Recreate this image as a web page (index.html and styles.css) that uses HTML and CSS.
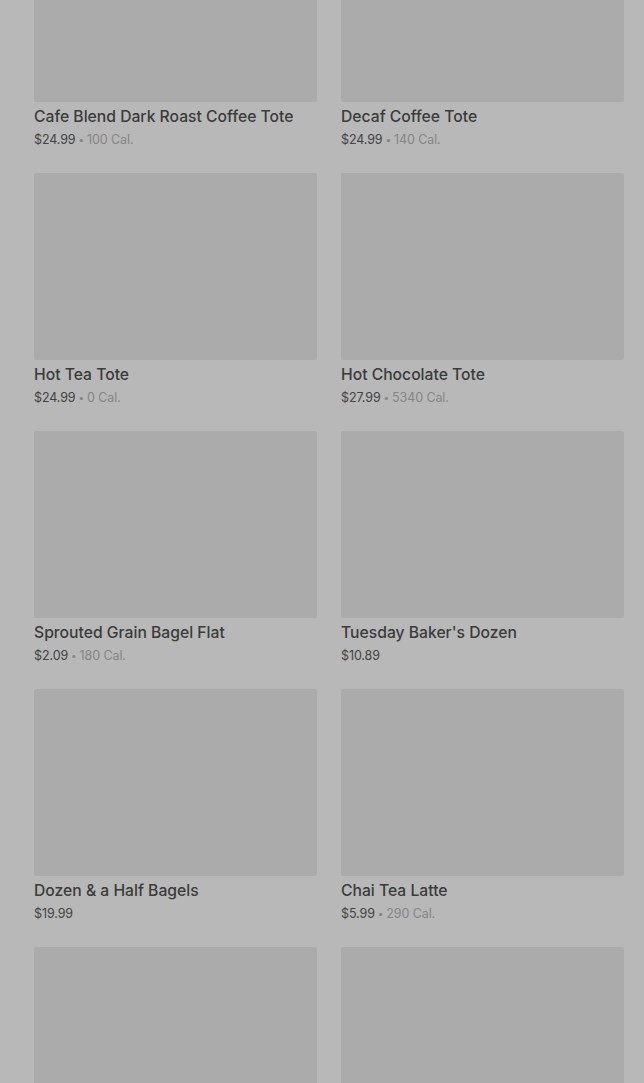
FILE: index.html
```html
<!DOCTYPE html>
<html lang="en">
<head>
    <meta charset="UTF-8">
    <meta name="viewport" content="width=device-width, initial-scale=1.0">
    <title>Menu</title>
    <link rel="stylesheet" href="styles.css">
</head>
<body>

<div class="page">
    <div class="product-grid">
        <div class="product">
            <div class="product-image"></div>
            <h3 class="product-name">Cafe Blend Dark Roast Coffee Tote</h3>
            <p class="product-meta"><span class="price">$24.99</span><span class="cal"><span class="sep">&bull;</span>100 Cal.</span></p>
        </div>
        <div class="product">
            <div class="product-image"></div>
            <h3 class="product-name">Decaf Coffee Tote</h3>
            <p class="product-meta"><span class="price">$24.99</span><span class="cal"><span class="sep">&bull;</span>140 Cal.</span></p>
        </div>
        <div class="product">
            <div class="product-image"></div>
            <h3 class="product-name">Hot Tea Tote</h3>
            <p class="product-meta"><span class="price">$24.99</span><span class="cal"><span class="sep">&bull;</span>0 Cal.</span></p>
        </div>
        <div class="product">
            <div class="product-image"></div>
            <h3 class="product-name">Hot Chocolate Tote</h3>
            <p class="product-meta"><span class="price">$27.99</span><span class="cal"><span class="sep">&bull;</span>5340 Cal.</span></p>
        </div>
        <div class="product">
            <div class="product-image"></div>
            <h3 class="product-name">Sprouted Grain Bagel Flat</h3>
            <p class="product-meta"><span class="price">$2.09</span><span class="cal"><span class="sep">&bull;</span>180 Cal.</span></p>
        </div>
        <div class="product">
            <div class="product-image"></div>
            <h3 class="product-name">Tuesday Baker's Dozen</h3>
            <p class="product-meta"><span class="price">$10.89</span></p>
        </div>
        <div class="product">
            <div class="product-image"></div>
            <h3 class="product-name">Dozen &amp; a Half Bagels</h3>
            <p class="product-meta"><span class="price">$19.99</span></p>
        </div>
        <div class="product">
            <div class="product-image"></div>
            <h3 class="product-name">Chai Tea Latte</h3>
            <p class="product-meta"><span class="price">$5.99</span><span class="cal"><span class="sep">&bull;</span>290 Cal.</span></p>
        </div>
        <div class="product">
            <div class="product-image"></div>
        </div>
        <div class="product">
            <div class="product-image"></div>
        </div>
    </div>
</div>

</body>
</html>
```

FILE: styles.css
```css
body {
    font-family: 'Inter', 'Liberation Sans', sans-serif;
    background-color: #b8b8b8;
    color: #3b3b3b;
    margin: 0;
    padding: 0;
    height: 100vh;
    overflow: hidden;
}
.page {
    padding: 0 20px 0 34px;
}
.product-grid {
    display: grid;
    grid-template-columns: 1fr 1fr;
    column-gap: 24px;
    row-gap: 23px;
    margin-top: -85px; /* list is scrolled */
}
.product-image {
    height: 187px;
    background-color: #ababab;
    border-radius: 2px;
}
.product-name {
    margin: 3px 0 0;
    font-size: 15.7px;
    font-weight: 500;
    line-height: 24px;
    color: #3b3b3b;
}
.product-meta {
    margin: 0;
    padding-top: 1px;
    font-size: 12.5px;
    line-height: 20px;
    letter-spacing: -0.1px;
}
.price {
    color: #434343;
}
.cal {
    color: #858585;
}
.sep {
    margin: 0 3px;
    font-size: 10px;
    line-height: 10px;
    vertical-align: 1px;
}
```
